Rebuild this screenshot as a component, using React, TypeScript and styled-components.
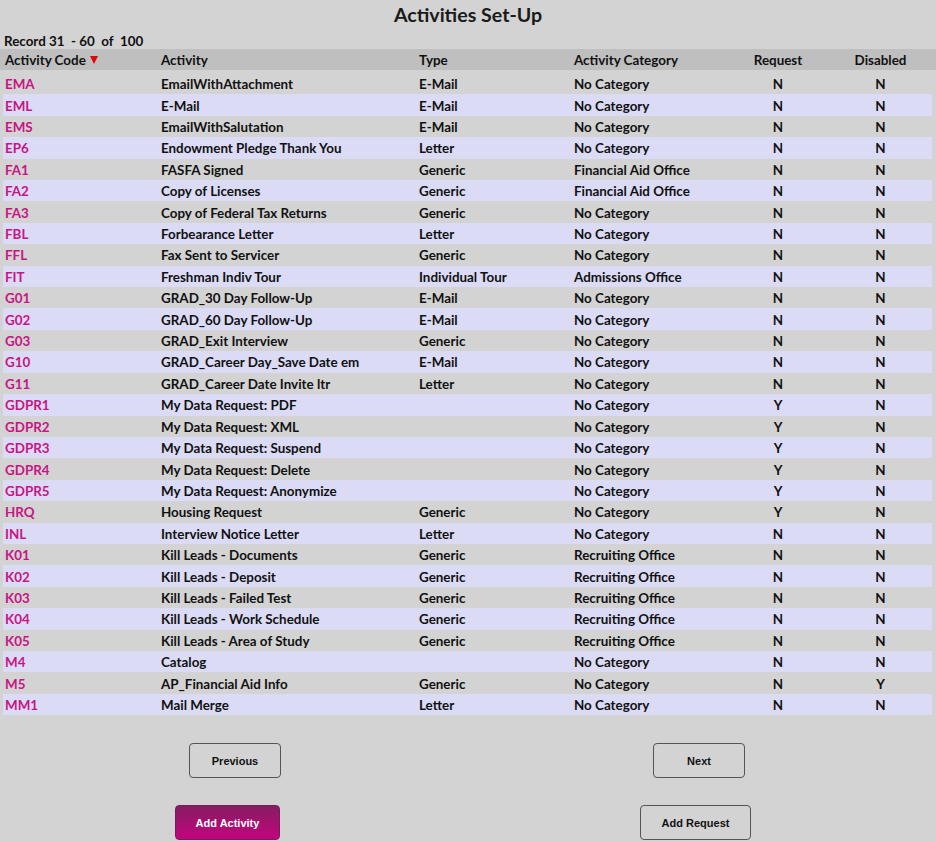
import React from 'react';
import styled, { createGlobalStyle } from 'styled-components';

const GlobalStyle = createGlobalStyle`
  html, body {
    margin: 0;
    padding: 0;
    background: #d3d3d3;
  }
  body {
    font-family: 'Lato', 'Liberation Sans', sans-serif;
    color: #111;
  }
`;

const COLS = '156px 258px 155px 155px 100px 105px';

const Page = styled.div`
  width: 936px;
  padding-top: 4px;
`;

const Title = styled.h1`
  margin: 0;
  text-align: center;
  font-size: 19.6px;
  font-weight: 700;
  line-height: 22px;
  color: #1a1a1a;
`;

const RecordInfo = styled.div`
  margin: 7px 0 0 4px;
  font-size: 13.4px;
  font-weight: 700;
  line-height: 16px;
  white-space: pre;
`;

const HeaderRow = styled.div`
  display: grid;
  grid-template-columns: ${COLS};
  height: 21px;
  align-items: center;
  padding-left: 3px;
  background: #bfbfbf;
`;

const HeadCell = styled.div<{ $center?: boolean }>`
  font-size: 13.4px;
  font-weight: 700;
  padding-left: 2px;
  white-space: nowrap;
  display: flex;
  align-items: center;
  justify-content: ${(p) => (p.$center ? 'center' : 'flex-start')};
  gap: 4px;
`;

const Body = styled.div`
  margin: 3px 4px 0 3px;
`;

const Row = styled.div<{ $alt: boolean }>`
  display: grid;
  grid-template-columns: ${COLS};
  height: 21.42px;
  align-items: center;
  background: ${(p) => (p.$alt ? '#dbdbf5' : 'transparent')};
`;

const Cell = styled.div<{ $center?: boolean; $code?: boolean }>`
  font-size: 13.4px;
  font-weight: 700;
  padding-left: 2px;
  padding-top: 1px;
  white-space: nowrap;
  text-align: ${(p) => (p.$center ? 'center' : 'left')};
  color: ${(p) => (p.$code ? '#c71585' : '#111')};
`;

const ButtonRow = styled.div<{ $cols: string; $top: number }>`
  display: grid;
  grid-template-columns: ${(p) => p.$cols};
  margin-top: ${(p) => p.$top}px;
  justify-items: center;
`;

const Button = styled.button<{ $w: number; $primary?: boolean }>`
  width: ${(p) => p.$w}px;
  height: 35px;
  border-radius: 4px;
  border: 1px solid ${(p) => (p.$primary ? '#7a1a58' : '#555')};
  background: ${(p) => (p.$primary ? 'linear-gradient(#861d62, #c3047d)' : 'transparent')};
  color: ${(p) => (p.$primary ? '#fff' : '#111')};
  font-family: 'Liberation Sans', Arial, sans-serif;
  font-size: 11px;
  font-weight: 700;
  padding: 0;
  cursor: pointer;
`;

type Activity = [string, string, string, string, string, string];

const rows: Activity[] = [
  ['EMA', 'EmailWithAttachment', 'E-Mail', 'No Category', 'N', 'N'],
  ['EML', 'E-Mail', 'E-Mail', 'No Category', 'N', 'N'],
  ['EMS', 'EmailWithSalutation', 'E-Mail', 'No Category', 'N', 'N'],
  ['EP6', 'Endowment Pledge Thank You', 'Letter', 'No Category', 'N', 'N'],
  ['FA1', 'FASFA Signed', 'Generic', 'Financial Aid Office', 'N', 'N'],
  ['FA2', 'Copy of Licenses', 'Generic', 'Financial Aid Office', 'N', 'N'],
  ['FA3', 'Copy of Federal Tax Returns', 'Generic', 'No Category', 'N', 'N'],
  ['FBL', 'Forbearance Letter', 'Letter', 'No Category', 'N', 'N'],
  ['FFL', 'Fax Sent to Servicer', 'Generic', 'No Category', 'N', 'N'],
  ['FIT', 'Freshman Indiv Tour', 'Individual Tour', 'Admissions Office', 'N', 'N'],
  ['G01', 'GRAD_30 Day Follow-Up', 'E-Mail', 'No Category', 'N', 'N'],
  ['G02', 'GRAD_60 Day Follow-Up', 'E-Mail', 'No Category', 'N', 'N'],
  ['G03', 'GRAD_Exit Interview', 'Generic', 'No Category', 'N', 'N'],
  ['G10', 'GRAD_Career Day_Save Date em', 'E-Mail', 'No Category', 'N', 'N'],
  ['G11', 'GRAD_Career Date Invite ltr', 'Letter', 'No Category', 'N', 'N'],
  ['GDPR1', 'My Data Request: PDF', '', 'No Category', 'Y', 'N'],
  ['GDPR2', 'My Data Request: XML', '', 'No Category', 'Y', 'N'],
  ['GDPR3', 'My Data Request: Suspend', '', 'No Category', 'Y', 'N'],
  ['GDPR4', 'My Data Request: Delete', '', 'No Category', 'Y', 'N'],
  ['GDPR5', 'My Data Request: Anonymize', '', 'No Category', 'Y', 'N'],
  ['HRQ', 'Housing Request', 'Generic', 'No Category', 'Y', 'N'],
  ['INL', 'Interview Notice Letter', 'Letter', 'No Category', 'N', 'N'],
  ['K01', 'Kill Leads - Documents', 'Generic', 'Recruiting Office', 'N', 'N'],
  ['K02', 'Kill Leads - Deposit', 'Generic', 'Recruiting Office', 'N', 'N'],
  ['K03', 'Kill Leads - Failed Test', 'Generic', 'Recruiting Office', 'N', 'N'],
  ['K04', 'Kill Leads - Work Schedule', 'Generic', 'Recruiting Office', 'N', 'N'],
  ['K05', 'Kill Leads - Area of Study', 'Generic', 'Recruiting Office', 'N', 'N'],
  ['M4', 'Catalog', '', 'No Category', 'N', 'N'],
  ['M5', 'AP_Financial Aid Info', 'Generic', 'No Category', 'N', 'Y'],
  ['MM1', 'Mail Merge', 'Letter', 'No Category', 'N', 'N'],
];

function SortArrow() {
  return (
    <svg width="8" height="8" viewBox="0 0 8 8">
      <polygon points="0,0 8,0 4,8" fill="#e60000" />
    </svg>
  );
}

export default function App() {
  return (
    <Page>
      <GlobalStyle />
      <Title>Activities Set-Up</Title>
      <RecordInfo>Record 31  - 60  of  100</RecordInfo>
      <HeaderRow>
        <HeadCell>
          Activity Code <SortArrow />
        </HeadCell>
        <HeadCell>Activity</HeadCell>
        <HeadCell>Type</HeadCell>
        <HeadCell>Activity Category</HeadCell>
        <HeadCell $center>Request</HeadCell>
        <HeadCell $center>Disabled</HeadCell>
      </HeaderRow>
      <Body>
        {rows.map(([code, name, type, cat, req, dis], i) => (
          <Row key={code} $alt={i % 2 === 1}>
            <Cell $code>{code}</Cell>
            <Cell>{name}</Cell>
            <Cell>{type}</Cell>
            <Cell>{cat}</Cell>
            <Cell $center>{req}</Cell>
            <Cell $center>{dis}</Cell>
          </Row>
        ))}
      </Body>
      <ButtonRow $cols="470px 458px" $top={28}>
        <Button $w={92}>Previous</Button>
        <Button $w={92}>Next</Button>
      </ButtonRow>
      <ButtonRow $cols="455px 481px" $top={27}>
        <Button $w={105} $primary>
          Add Activity
        </Button>
        <Button $w={111}>Add Request</Button>
      </ButtonRow>
    </Page>
  );
}
